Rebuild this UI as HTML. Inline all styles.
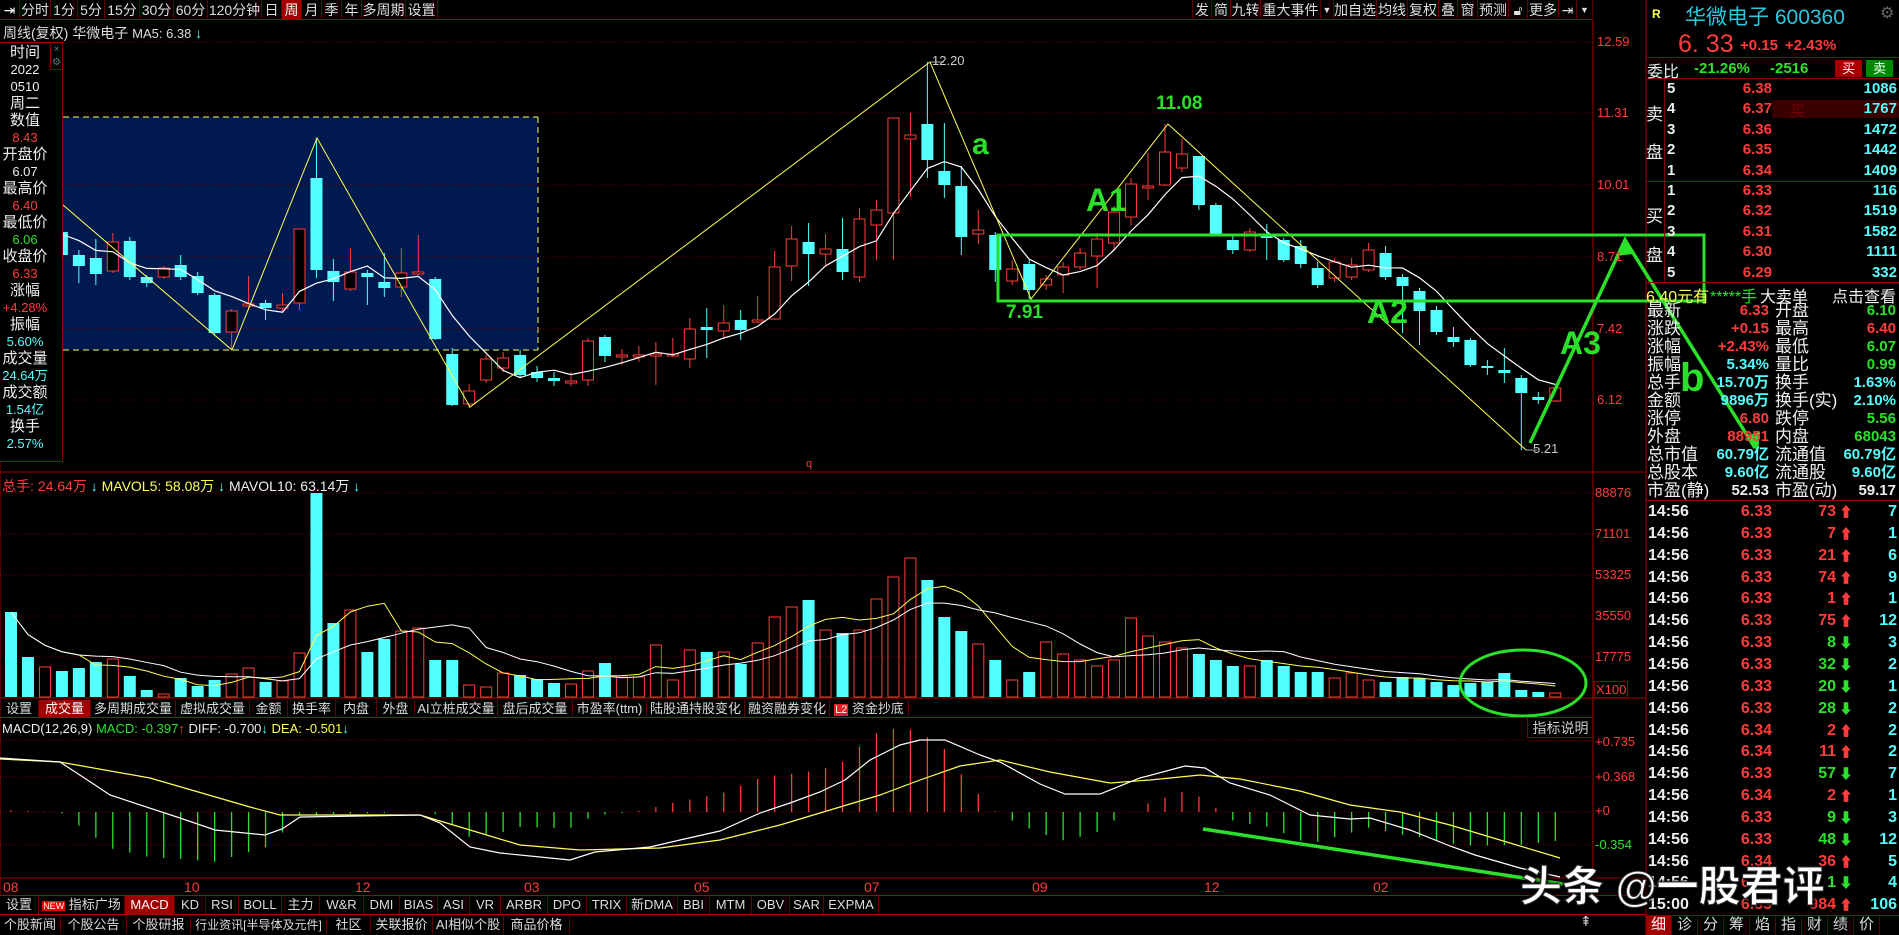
<!DOCTYPE html>
<html><head><meta charset="utf-8">
<style>
*{margin:0;padding:0;box-sizing:border-box}
body{width:1899px;height:935px;background:#000;overflow:hidden;position:relative;font-family:"Liberation Sans","Noto Sans CJK SC",sans-serif;color:#ddd}
.a{position:absolute;white-space:nowrap}
.tb{position:absolute;top:0;height:20px;font-size:14px;line-height:20px;color:#ddd;border-right:1px solid #600;text-align:center}
.r{color:#ff3c3c}.g{color:#2ee02e}.c{color:#54ffff}.y{color:#ffff54}.w{color:#eee}
.tab{position:absolute;height:18px;font-size:13px;line-height:18px;color:#ddd;border-right:1px solid #600;text-align:center;white-space:nowrap;overflow:hidden}
.ob{position:absolute;font-size:15px;font-weight:bold;line-height:18px}
.st{position:absolute;font-size:15px;line-height:18px}
</style></head><body>
<svg id="ch" width="1899" height="935" style="position:absolute;left:0;top:0"></svg>

<div class="a" style="left:0;top:0;width:1593px;height:20px;border-bottom:1px solid #a00"></div>
<div class="tb" style="left:0;width:20px;color:#fff">⇥</div>
<div class="tb" style="left:20px;width:31px">分时</div>
<div class="tb" style="left:51px;width:27px">1分</div>
<div class="tb" style="left:78px;width:27px">5分</div>
<div class="tb" style="left:105px;width:35px">15分</div>
<div class="tb" style="left:140px;width:34px">30分</div>
<div class="tb" style="left:174px;width:34px">60分</div>
<div class="tb" style="left:208px;width:54px">120分钟</div>
<div class="tb" style="left:262px;width:20px">日</div>
<div class="tb" style="left:282px;width:20px;background:#a00000;color:#fff">周</div>
<div class="tb" style="left:302px;width:20px">月</div>
<div class="tb" style="left:322px;width:20px">季</div>
<div class="tb" style="left:342px;width:20px">年</div>
<div class="tb" style="left:362px;width:44px">多周期</div>
<div class="tb" style="left:406px;width:32px">设置</div>
<div class="tb" style="left:1192px;width:20px;border-left:1px solid #600">发</div>
<div class="tb" style="left:1212px;width:19px">简</div>
<div class="tb" style="left:1231px;width:30px">九转</div>
<div class="tb" style="left:1261px;width:60px">重大事件</div>
<div class="tb" style="left:1321px;width:13px;font-size:9px">▼</div>
<div class="tb" style="left:1334px;width:43px">加自选</div>
<div class="tb" style="left:1377px;width:31px">均线</div>
<div class="tb" style="left:1408px;width:31px">复权</div>
<div class="tb" style="left:1439px;width:19px">叠</div>
<div class="tb" style="left:1458px;width:20px">窗</div>
<div class="tb" style="left:1478px;width:31px">预测</div>
<div class="tb" style="left:1509px;width:19px">🔓︎</div>
<div class="tb" style="left:1528px;width:31px">更多</div>
<div class="tb" style="left:1559px;width:18px">⇥</div>
<div class="tb" style="left:1577px;width:16px;font-size:9px">▼</div>

<div class="a" style="left:3px;top:23px;font-size:14px;color:#ddd">周线(复权) 华微电子 <span style="font-size:13px">MA5: 6.38</span><span class="c"> ↓</span></div>

<div class="a" style="left:0;top:42px;width:63px;height:420px;background:#000;border:1px solid #800;border-left:none"></div>
<div class="a" style="left:50px;top:42px;width:13px;height:28px;border:1px solid #800;font-size:10px;line-height:13px;color:#777;text-align:center">×<br>⚙</div>
<div class="a" style="left:0;top:44px;width:50px;text-align:center;font-size:15px;line-height:17px">
<div class="w">时间</div><div class="w" style="font-size:13px">2022</div><div class="w" style="font-size:13px">0510</div><div class="w">周二</div><div class="w">数值</div><div class="r" style="font-size:13px">8.43</div><div class="w">开盘价</div><div class="w" style="font-size:13px">6.07</div><div class="w">最高价</div><div class="r" style="font-size:13px">6.40</div><div class="w">最低价</div><div class="g" style="font-size:13px">6.06</div><div class="w">收盘价</div><div class="r" style="font-size:13px">6.33</div><div class="w">涨幅</div><div class="r" style="font-size:13px">+4.28%</div><div class="w">振幅</div><div class="c" style="font-size:13px">5.60%</div><div class="w">成交量</div><div class="c" style="font-size:13px">24.64万</div><div class="w">成交额</div><div class="c" style="font-size:13px">1.54亿</div><div class="w">换手</div><div class="c" style="font-size:13px">2.57%</div>
</div>

<div class="a r" style="left:1597px;top:34px;font-size:13px">12.59</div>
<div class="a r" style="left:1597px;top:105px;font-size:13px">11.31</div>
<div class="a r" style="left:1597px;top:177px;font-size:13px">10.01</div>
<div class="a r" style="left:1597px;top:249px;font-size:13px">8.71</div>
<div class="a r" style="left:1597px;top:321px;font-size:13px">7.42</div>
<div class="a r" style="left:1597px;top:392px;font-size:13px">6.12</div>
<div class="a r" style="left:1595px;top:485px;font-size:13px">88876</div>
<div class="a r" style="left:1595px;top:526px;font-size:13px">71101</div>
<div class="a r" style="left:1595px;top:567px;font-size:13px">53325</div>
<div class="a r" style="left:1595px;top:608px;font-size:13px">35550</div>
<div class="a r" style="left:1595px;top:649px;font-size:13px">17775</div>
<div class="a r" style="left:1594px;top:681px;font-size:13px;border:1px solid #800;padding:0 1px">X100</div>
<div class="a r" style="left:1595px;top:734px;font-size:13px">+0.735</div>
<div class="a r" style="left:1595px;top:769px;font-size:13px">+0.368</div>
<div class="a r" style="left:1595px;top:803px;font-size:13px">+0</div>
<div class="a g" style="left:1595px;top:837px;font-size:13px">-0.354</div>

<div class="a" style="left:932px;top:53px;font-size:13px;color:#ccc">12.20</div>
<div class="a" style="left:1533px;top:441px;font-size:13px;color:#ccc">5.21</div>
<div class="a r" style="left:806px;top:458px;font-size:11px">q</div>

<div class="a" style="left:2px;top:476px;font-size:14px"><span class="r">总手: 24.64万</span><span class="c"> ↓ </span> <span class="y">MAVOL5: 58.08万</span><span class="c"> ↓ </span> <span class="w">MAVOL10: 63.14万</span><span class="c"> ↓</span></div>

<div class="a" style="left:0;top:699px;width:1593px;height:19px;border-bottom:1px solid #a00"></div>
<div class="tab" style="top:700px;left:0;width:39px">设置</div>
<div class="tab" style="top:700px;left:39px;width:52px;background:#a00000;color:#fff">成交量</div>
<div class="tab" style="top:700px;left:91px;width:85px">多周期成交量</div>
<div class="tab" style="top:700px;left:176px;width:74px">虚拟成交量</div>
<div class="tab" style="top:700px;left:250px;width:38px">金额</div>
<div class="tab" style="top:700px;left:288px;width:48px">换手率</div>
<div class="tab" style="top:700px;left:336px;width:41px">内盘</div>
<div class="tab" style="top:700px;left:377px;width:38px">外盘</div>
<div class="tab" style="top:700px;left:415px;width:83px">AI立桩成交量</div>
<div class="tab" style="top:700px;left:498px;width:75px">盘后成交量</div>
<div class="tab" style="top:700px;left:573px;width:74px">市盈率(ttm)</div>
<div class="tab" style="top:700px;left:647px;width:98px">陆股通持股变化</div>
<div class="tab" style="top:700px;left:745px;width:85px">融资融券变化</div>
<div class="tab" style="top:700px;left:830px;width:79px"><span style="background:#e02020;color:#fff;font-size:11px;padding:0 1px">L2</span> 资金抄底</div>

<div class="a" style="left:2px;top:721px;font-size:13px"><span class="w">MACD(12,26,9)</span> <span class="g">MACD: -0.397</span><span class="r">↑</span> <span class="w">DIFF: -0.700</span><span class="c">↓</span> <span class="y">DEA: -0.501</span><span class="c">↓</span></div>
<div class="a" style="left:1527px;top:718px;width:66px;height:20px;border-left:1px solid #800;border-bottom:1px solid #800;font-size:14px;line-height:20px;text-align:center;color:#ccc">指标说明</div>

<div class="a r" style="left:3px;top:879px;font-size:14px">08</div>
<div class="a r" style="left:184px;top:879px;font-size:14px">10</div>
<div class="a r" style="left:355px;top:879px;font-size:14px">12</div>
<div class="a r" style="left:524px;top:879px;font-size:14px">03</div>
<div class="a r" style="left:694px;top:879px;font-size:14px">05</div>
<div class="a r" style="left:864px;top:879px;font-size:14px">07</div>
<div class="a r" style="left:1032px;top:879px;font-size:14px">09</div>
<div class="a r" style="left:1204px;top:879px;font-size:14px">12</div>
<div class="a r" style="left:1373px;top:879px;font-size:14px">02</div>

<div class="a" style="left:0;top:895px;width:1646px;height:20px;border-top:1px solid #a00;border-bottom:1px solid #a00"></div>
<div class="tab" style="top:896px;left:0;width:39px">设置</div>
<div class="tab" style="top:896px;left:39px;width:86px"><span style="background:#e00;color:#fff;font-size:9px;padding:0 1px">NEW</span> 指标广场</div>
<div class="tab" style="top:896px;left:125px;width:50px;background:#a00000;color:#fff">MACD</div>
<div class="tab" style="top:896px;left:175px;width:31px">KD</div>
<div class="tab" style="top:896px;left:206px;width:33px">RSI</div>
<div class="tab" style="top:896px;left:239px;width:43px">BOLL</div>
<div class="tab" style="top:896px;left:282px;width:38px">主力</div>
<div class="tab" style="top:896px;left:320px;width:44px">W&amp;R</div>
<div class="tab" style="top:896px;left:364px;width:36px">DMI</div>
<div class="tab" style="top:896px;left:400px;width:38px">BIAS</div>
<div class="tab" style="top:896px;left:438px;width:32px">ASI</div>
<div class="tab" style="top:896px;left:470px;width:31px">VR</div>
<div class="tab" style="top:896px;left:501px;width:47px">ARBR</div>
<div class="tab" style="top:896px;left:548px;width:39px">DPO</div>
<div class="tab" style="top:896px;left:587px;width:40px">TRIX</div>
<div class="tab" style="top:896px;left:627px;width:51px">新DMA</div>
<div class="tab" style="top:896px;left:678px;width:32px">BBI</div>
<div class="tab" style="top:896px;left:710px;width:42px">MTM</div>
<div class="tab" style="top:896px;left:752px;width:38px">OBV</div>
<div class="tab" style="top:896px;left:790px;width:34px">SAR</div>
<div class="tab" style="top:896px;left:824px;width:55px">EXPMA</div>
<div class="tab" style="top:916px;left:0;width:61px">个股新闻</div>
<div class="tab" style="top:916px;left:61px;width:66px">个股公告</div>
<div class="tab" style="top:916px;left:127px;width:64px">个股研报</div>
<div class="tab" style="top:916px;left:191px;width:136px;font-size:12px">行业资讯[半导体及元件]</div>
<div class="tab" style="top:916px;left:327px;width:44px">社区</div>
<div class="tab" style="top:916px;left:371px;width:62px">关联报价</div>
<div class="tab" style="top:916px;left:433px;width:71px">AI相似个股</div>
<div class="tab" style="top:916px;left:504px;width:66px">商品价格</div>
<div class="a" style="left:1580px;top:913px;font-size:14px;color:#ccc">⇞</div>

<div class="a" style="left:1652px;top:7px;font-size:12px;font-weight:bold;color:#ffff54">R</div>
<div class="a" style="left:1685px;top:1px;font-size:21px;color:#28c8e0">华微电子 600360</div>
<div class="a" style="left:1880px;top:3px;font-size:16px;color:#666">⚙</div>
<div class="a r" style="left:1678px;top:30px;font-size:25px">6. 33</div>
<div class="a r" style="left:1740px;top:37px;font-size:15px;font-weight:bold">+0.15</div>
<div class="a r" style="left:1785px;top:37px;font-size:15px;font-weight:bold">+2.43%</div>
<div class="a" style="left:1646px;top:57px;width:253px;height:22px;border-top:1px solid #800;border-bottom:1px solid #800"></div>
<div class="a w" style="left:1647px;top:58px;font-size:16px">委比</div>
<div class="a g" style="left:1694px;top:60px;font-size:15px;font-weight:bold">-21.26%</div>
<div class="a g" style="left:1770px;top:60px;font-size:15px;font-weight:bold">-2516</div>
<div class="a" style="left:1835px;top:60px;width:27px;height:17px;background:#a00000;color:#fff;font-size:13px;text-align:center;line-height:17px">买</div>
<div class="a" style="left:1866px;top:60px;width:27px;height:17px;background:#008800;color:#fff;font-size:13px;text-align:center;line-height:17px">卖</div>
<div class="a" style="left:1664px;top:79px;width:1px;height:203px;background:#800"></div>
<div class="a" style="left:1646px;top:181px;width:253px;height:1px;background:#800"></div>
<div class="a" style="left:1772px;top:100px;width:127px;height:18px;background:#3a0000"></div>
<div class="a" style="left:1790px;top:100px;font-size:15px;color:#700">买</div>
<div class="a w" style="left:1646px;top:100px;font-size:17px">卖</div>
<div class="a w" style="left:1646px;top:138px;font-size:17px">盘</div>
<div class="a w" style="left:1646px;top:202px;font-size:17px">买</div>
<div class="a w" style="left:1646px;top:241px;font-size:17px">盘</div>
<div id="ob"></div>
<div class="a" style="left:1646px;top:282px;width:253px;height:1px;background:#800"></div>
<div class="a y" style="left:1646px;top:283px;font-size:16px">6.40元有</div>
<div class="a g" style="left:1710px;top:283px;font-size:16px">*****手</div>
<div class="a w" style="left:1760px;top:283px;font-size:16px">大卖单</div>
<div class="a w" style="left:1832px;top:283px;font-size:16px">点击查看</div>
<div id="st"></div>
<div class="a" style="left:1646px;top:500px;width:253px;height:1px;background:#800"></div>
<div id="tk"></div>
<div class="a" style="left:1646px;top:915px;width:253px;height:20px;border-top:1px solid #800"></div>
<div id="bt"></div>

<div class="a g" style="left:972px;top:128px;font-size:30px;font-weight:bold;color:#2be02b">a</div>
<div class="a" style="left:1156px;top:93px;font-size:19px;font-weight:bold;color:#2be02b">11.08</div>
<div class="a" style="left:1086px;top:182px;font-size:32px;font-weight:bold;color:#2be02b">A1</div>
<div class="a" style="left:1006px;top:302px;font-size:19px;font-weight:bold;color:#2be02b">7.91</div>
<div class="a" style="left:1367px;top:294px;font-size:32px;font-weight:bold;color:#2be02b">A2</div>
<div class="a" style="left:1560px;top:325px;font-size:32px;font-weight:bold;color:#2be02b">A3</div>
<div class="a" style="left:1680px;top:356px;font-size:40px;font-weight:bold;color:#2be02b">b</div>
<div class="a" style="left:1520px;top:853px;font-size:42px;font-weight:bold;color:#fff;-webkit-text-stroke:1px #333;text-shadow:2px 2px 3px #000,-1px -1px 2px #000">头条 @一股君评</div>

<script>
const S='http://www.w3.org/2000/svg';const svg=document.getElementById('ch');
function el(t,a){const e=document.createElementNS(S,t);for(const k in a)e.setAttribute(k,a[k]);svg.appendChild(e);return e;}
const RED='#ff3c3c',CY='#54ffff';
el('rect',{x:63,y:117,width:475,height:233,fill:'#001a50'});
el('line',{x1:63,y1:117,x2:538,y2:117,stroke:'#ffff54','stroke-dasharray':'6,4'});
el('line',{x1:63,y1:350,x2:538,y2:350,stroke:'#ffff54','stroke-dasharray':'6,4'});
el('line',{x1:538,y1:117,x2:538,y2:350,stroke:'#ffff54','stroke-dasharray':'6,4'});
[42,113,185,257,329,400,493,534,575,616,657,740,777,812,845].forEach(y=>el('line',{x1:0,y1:y,x2:1593,y2:y,stroke:'#6a0000','stroke-dasharray':'1,2'}));
[[0,472,1646,472],[0,698,1646,698],[0,878,1646,878],[1593,20,1593,895],[1646,0,1646,935],[0,42,0,895]].forEach(l=>el('line',{x1:l[0],y1:l[1],x2:l[2],y2:l[3],stroke:'#a00000'}));
const C=[[205,225,200,230,'c'],[215,235,208,240,'c'],[222,240,215,245,'r'],[232,255,228,258,'c'],[255,266,250,283,'c'],[258,274,239,285,'c'],[242,271,233,273,'r'],[241,277,237,280,'c'],[277,283,275,287,'c'],[268,277,266,279,'r'],[265,277,255,280,'c'],[276,293,272,295,'c'],[295,333,293,335,'c'],[311,332,309,350,'r'],[304,306,276,310,'r'],[303,308,300,320,'c'],[305,308,293,313,'r'],[229,303,229,310,'r'],[178,270,138,278,'c'],[271,282,259,301,'c'],[272,289,248,291,'r'],[273,277,270,305,'c'],[282,288,253,297,'c'],[273,287,248,297,'r'],[272,274,235,275,'r'],[279,339,277,340,'c'],[354,405,348,406,'c'],[391,404,384,408,'r'],[359,380,355,383,'r'],[358,368,352,372,'r'],[355,375,350,378,'c'],[372,378,366,382,'c'],[378,381,372,386,'c'],[381,383,372,386,'r'],[341,380,338,386,'r'],[337,356,335,362,'c'],[355,357,349,365,'r'],[355,357,346,362,'r'],[354,356,342,385,'r'],[354,356,338,357,'r'],[329,359,318,368,'r'],[327,330,308,358,'c'],[323,331,305,337,'r'],[320,330,310,340,'c'],[320,322,296,323,'r'],[267,319,251,320,'r'],[239,266,226,281,'r'],[242,254,223,286,'c'],[249,254,234,265,'r'],[249,272,218,280,'c'],[219,277,208,282,'r'],[210,225,200,260,'r'],[118,213,118,260,'r'],[135,139,113,197,'r'],[124,160,62,178,'c'],[171,185,123,198,'c'],[186,237,166,255,'c'],[230,234,210,244,'r'],[235,270,232,282,'c'],[269,281,260,285,'r'],[264,290,260,299,'c'],[279,285,275,290,'r'],[267,275,262,293,'r'],[253,267,248,270,'r'],[239,256,233,288,'r'],[212,243,206,250,'r'],[184,217,178,225,'r'],[186,188,153,200,'r'],[152,185,124,186,'r'],[154,168,139,172,'r'],[156,205,156,210,'c'],[205,234,203,236,'c'],[240,250,236,254,'c'],[232,250,228,252,'r'],[236,238,224,260,'c'],[240,260,238,262,'c'],[246,264,240,268,'c'],[268,285,262,288,'c'],[262,278,258,282,'r'],[265,277,258,280,'r'],[250,270,243,272,'r'],[253,277,246,280,'c'],[277,286,274,333,'c'],[291,311,288,345,'c'],[310,332,306,335,'c'],[337,342,327,347,'c'],[340,365,338,367,'c'],[366,368,360,375,'c'],[370,373,348,383,'c'],[378,393,375,450,'c'],[397,400,392,404,'c'],[388,401,388,402,'r']];
const V=[612,657,667,671,668,662,659,676,690,694,678,686,680,674,668,682,681,653,493,623,610,652,639,631,628,660,660,685,687,673,675,679,683,684,671,663,677,677,645,680,650,652,652,664,643,617,607,600,630,633,630,599,577,558,580,617,631,644,660,680,672,642,654,660,666,660,618,636,642,648,654,660,666,666,660,666,672,672,678,673,680,682,677,678,682,685,683,682,673,690,692,693];
const X=i=>11+16.97*i;
V.forEach((t,i)=>{const x=X(i),w=12,col=C[i][4];
 if(col=='r')el('rect',{x:x-w/2+0.5,y:t,width:w-1,height:697-t,fill:'none',stroke:RED});
 else el('rect',{x:x-w/2,y:t,width:w,height:697-t,fill:CY});});
function ma(arr,n){return arr.map((v,i)=>{let s=0,c=0;for(let k=Math.max(0,i-n+1);k<=i;k++){s+=arr[k];c++;}return s/c;});}
const vh=V.map(t=>697-t);
[[5,'#ffff54'],[10,'#fff']].forEach(([n,c])=>{const m=ma(vh,n);el('polyline',{points:m.map((h,i)=>X(i)+','+(697-h)).join(' '),fill:'none',stroke:c,'stroke-width':1});});
const close=[];
C.forEach((d,i)=>{const x=X(i),w=12;const col=d[4]=='r'?RED:CY;
 el('line',{x1:x,y1:d[2],x2:x,y2:d[3],stroke:col});
 const h=Math.max(d[1]-d[0],1.5);
 if(d[4]=='r'){el('rect',{x:x-w/2+0.5,y:d[0],width:w-1,height:h,fill:'#000',stroke:col});}
 else el('rect',{x:x-w/2,y:d[0],width:w,height:h,fill:col});
 close.push(d[4]=='r'?d[0]:d[1]);});
const m5=ma(close,5);
el('polyline',{points:m5.map((y,i)=>X(i)+','+y).join(' '),fill:'none',stroke:'#fff','stroke-width':1.2});
el('polyline',{points:'0,190 63,205 232,350 317,138 470,407 930,62 1031,299 1168,124 1526,450',fill:'none',stroke:'#ffff54','stroke-width':1});
el('line',{x1:930,y1:62,x2:944,y2:62,stroke:'#aaa'});el('line',{x1:1526,y1:450,x2:1537,y2:450,stroke:'#aaa'});
const D=[[0,758],[60,762],[95,785],[110,795],[180,818],[215,830],[265,835],[282,829],[300,817],[420,815],[440,823],[470,847],[500,853],[540,857],[570,860],[595,852],[650,847],[680,840],[720,831],[760,813],[790,803],[820,792],[845,780],[870,760],[900,745],[920,740],[945,740],[980,755],[1000,762],[1040,784],[1065,794],[1100,794],[1140,778],[1185,766],[1205,768],[1230,783],[1270,795],[1310,815],[1350,819],[1370,818],[1410,830],[1450,846],[1475,855],[1520,868],[1560,877]];
const E=[[0,759],[60,762],[150,778],[250,807],[280,815],[420,815],[470,830],[520,845],[580,850],[660,848],[720,840],[780,825],[830,810],[880,795],[920,780],[960,766],[1000,760],[1050,772],[1110,783],[1150,780],[1200,775],[1240,779],[1300,791],[1350,805],[1400,812],[1450,825],[1500,840],[1560,858]];
function it(P,x){for(let k=1;k<P.length;k++){if(x<=P[k][0]){const a=P[k-1],b=P[k];return a[1]+(b[1]-a[1])*(x-a[0])/(b[0]-a[0]);}}return P[P.length-1][1];}
for(let i=0;i<92;i++){const x=X(i);let h=(it(E,x)-it(D,x));h=h>0?h*2:h*1.5;if(Math.abs(h)<0.5)continue;
 el('line',{x1:x,y1:812,x2:x,y2:812-h,stroke:h>0?RED:'#2ee02e','stroke-width':1.3});}
el('polyline',{points:E.map(p=>p.join(',')).join(' '),fill:'none',stroke:'#ffff54','stroke-width':1.2});
el('polyline',{points:D.map(p=>p.join(',')).join(' '),fill:'none',stroke:'#fff','stroke-width':1.2});
const G='#2be02b';
el('rect',{x:998,y:235,width:706,height:66,fill:'none',stroke:G,'stroke-width':3});
el('polyline',{points:'1530,443 1625,240 1755,448',fill:'none',stroke:G,'stroke-width':3.5});
el('polygon',{points:'1625,236 1616,256 1633,254',fill:G});
el('polygon',{points:'1758,452 1745,436 1760,432',fill:G});
el('ellipse',{cx:1523,cy:683,rx:63,ry:33,fill:'none',stroke:G,'stroke-width':3});
el('line',{x1:1203,y1:829,x2:1563,y2:884,stroke:G,'stroke-width':3.5});
</script>
<script>
function add(id,h){document.getElementById(id).insertAdjacentHTML('beforeend',h);}
const sells=[['5','6.38','1086'],['4','6.37','1767'],['3','6.36','1472'],['2','6.35','1442'],['1','6.34','1409']];
const buys=[['1','6.33','116'],['2','6.32','1519'],['3','6.31','1582'],['4','6.30','1111'],['5','6.29','332']];
sells.concat(buys).forEach((r,i)=>{const y=80+i*20.4;
add('ob',`<div class="ob w" style="left:1667px;top:${y}px">${r[0]}</div><div class="ob r" style="right:${1899-1772}px;top:${y}px">${r[1]}</div><div class="ob c" style="right:2px;top:${y}px">${r[2]}</div>`);});
const st=[['最新','6.33','r','开盘','6.10','g'],['涨跌','+0.15','r','最高','6.40','r'],['涨幅','+2.43%','r','最低','6.07','g'],['振幅','5.34%','c','量比','0.99','g'],['总手','15.70万','c','换手','1.63%','c'],['金额','9896万','c','换手(实)','2.10%','c'],['涨停','6.80','r','跌停','5.56','g'],['外盘','88951','r','内盘','68043','g'],['总市值','60.79亿','c','流通值','60.79亿','c'],['总股本','9.60亿','c','流通股','9.60亿','c'],['市盈(静)','52.53','w','市盈(动)','59.17','w']];
st.forEach((r,i)=>{const y=302+i*18;
add('st',`<div class="st w" style="left:1647px;top:${y}px;font-size:17px">${r[0]}</div><div class="st ${r[2]}" style="right:${1899-1769}px;top:${y}px;font-weight:bold">${r[1]}</div><div class="st w" style="left:1775px;top:${y}px;font-size:17px">${r[3]}</div><div class="st ${r[5]}" style="right:3px;top:${y}px;font-weight:bold">${r[4]}</div>`);});
const tk=[['6.33','73',1,'7'],['6.33','7',1,'1'],['6.33','21',1,'6'],['6.33','74',1,'9'],['6.33','1',1,'1'],['6.33','75',1,'12'],['6.33','8',0,'3'],['6.33','32',0,'2'],['6.33','20',0,'1'],['6.33','28',0,'2'],['6.34','2',1,'2'],['6.34','11',1,'2'],['6.33','57',0,'7'],['6.34','2',1,'1'],['6.33','9',0,'3'],['6.33','48',0,'12'],['6.34','36',1,'5'],['6.33','1',0,'4'],['6.33','984',1,'106']];
tk.forEach((r,i)=>{const y=503+i*21.85;const t=i==18?'15:00':'14:56';const c=r[2]?'r':'g';
add('tk',`<div class="ob w" style="left:1648px;top:${y}px;font-size:16px">${t}</div><div class="ob r" style="right:${1899-1772}px;top:${y}px;font-size:16px">${r[0]}</div><div class="ob ${c}" style="right:${1899-1836}px;top:${y}px;font-size:16px">${r[1]}</div><div class="ob ${c}" style="left:1839px;top:${y}px;font-size:14px">${r[2]?'⬆':'⬇'}</div><div class="ob c" style="right:2px;top:${y}px;font-size:16px">${r[3]}</div>`);});
['细','诊','分','筹','焰','指','财','绩','价'].forEach((s,i)=>{add('bt',`<div class="tab" style="top:916px;left:${1646+i*26}px;width:26px;height:19px;font-size:15px;${i==0?'background:#a00000;color:#fff':''}">${s}</div>`);});
</script>
</body></html>
